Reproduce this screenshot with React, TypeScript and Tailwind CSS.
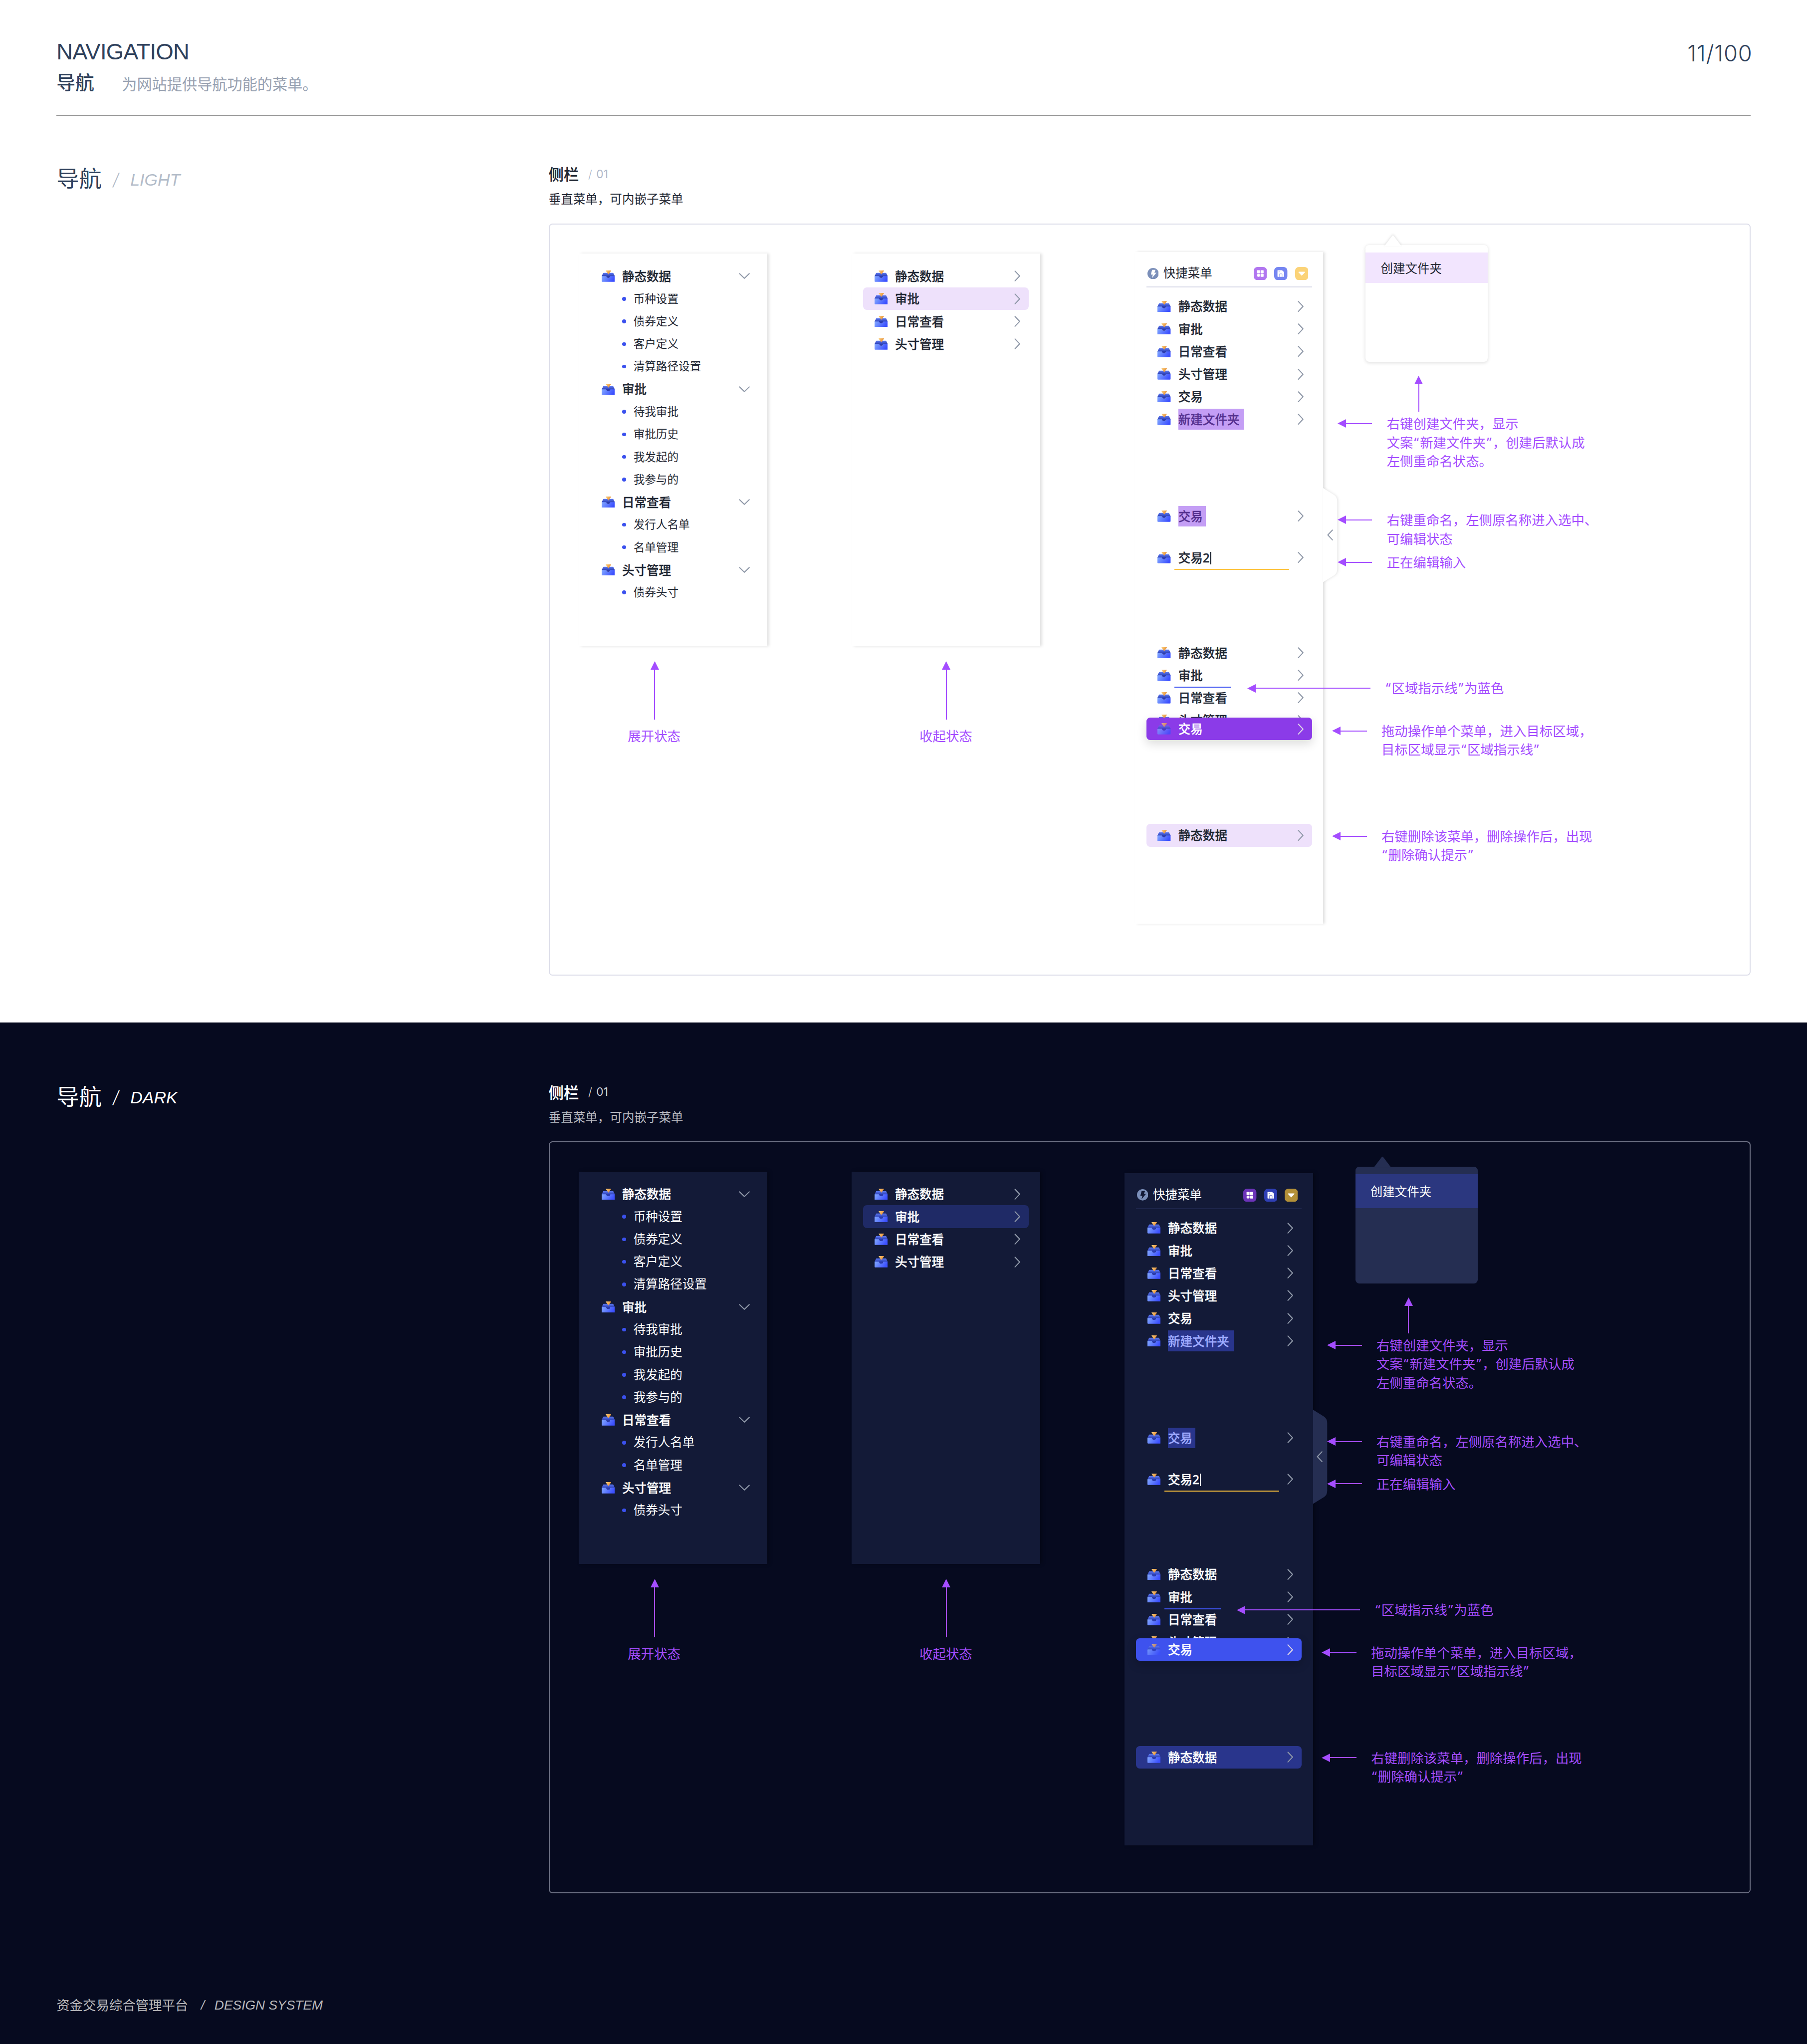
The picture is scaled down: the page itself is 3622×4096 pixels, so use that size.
import React from "react";

type Theme = "light" | "dark";

const CJK = "font-['Noto_Sans','Noto_Sans_CJK_SC',sans-serif]";
const LATIN = "font-['Liberation_Sans',Arial,sans-serif]";

const palette = {
  light: {
    text: "text-[#1f2733]",
    panel: "bg-white shadow-[2px_0_3px_rgba(0,0,0,0.12)]",
    soft: "bg-[#eee1fb]",
    removed: "bg-[#eee1fb]",
    selection: "bg-[#c49ef5] text-[#55308f]",
    dragged: "bg-[#8b3be8] shadow-[0_4px_10px_rgba(0,0,0,0.14)]",
    rule: "bg-[#d9dae8]",
    popover: "bg-white shadow-[0_1px_4px_rgba(0,0,0,0.14)]",
    popoverItem: "bg-[#f2e5fe] h-8",
    popoverFill: "#ffffff",
    handle: "#ffffff",
    bolt: "#ffffff",
    grid: "#b176f0",
    save: "#7585f1",
    caret: "#fbd378",
    sub: "text-xs",
  },
  dark: {
    text: "text-white",
    panel: "bg-[#131a37] shadow-[2px_0_4px_rgba(0,0,0,0.3)]",
    soft: "bg-[#1f2a66]",
    removed: "bg-[#29358c]",
    selection: "bg-[#29358c] text-[#9fabff]",
    dragged: "bg-[#3e52ee] shadow-[0_4px_10px_rgba(0,0,0,0.2)]",
    rule: "bg-[#1d254a]",
    popover: "bg-[#252e52]",
    popoverItem: "bg-[#2b377f] h-9",
    popoverFill: "#252e52",
    handle: "#252e52",
    bolt: "#131a37",
    grid: "#6b33b8",
    save: "#2f3fb4",
    caret: "#b39038",
    sub: "text-[13px]",
  },
};

function TrayIcon({ faded = false }: { faded?: boolean }) {
  return (
    <svg className={faded ? "h-3 w-3.5 shrink-0 opacity-75" : "h-3 w-3.5 shrink-0"} viewBox="0 0 14 12">
      <path d="M2.1 2.5H11.9a.5.5 0 0 1 .4.2L14 6v.3H0V6l1.7-3.3a.5.5 0 0 1 .4-.2Z" fill="url(#lid)" />
      <path d="M.4 6H4.6C5 6 5 6.4 5.1 6.8 5.4 7.6 6 8 7 8s1.7-.4 1.9-1.2C9 6.4 9 6 9.4 6H13.6a.4.4 0 0 1 .4.4v5a.6.6 0 0 1-.6.6H.6a.6.6 0 0 1-.6-.6v-5A.4.4 0 0 1 .4 6Z" fill="url(#front)" />
      <path d="M4.6 6H9.4C9 6 9 6.4 8.9 6.8 8.6 7.6 8 8 7 8S5.4 7.6 5.1 6.8C5 6.4 5 6 4.6 6Z" fill="#2a3bb0" />
      <path d="M4.6 0H9.8c.2 0 .3.2.2.4L7.5 3.8a.4.4 0 0 1-.6 0L4.4.4C4.3.2 4.4 0 4.6 0Z" fill="url(#cone)" />
    </svg>
  );
}

function Chevron({ dir, color = "#8f98a8" }: { dir: "right" | "down" | "left"; color?: string }) {
  const d = { right: "M5.6 2.8 10.5 8 5.6 13.2", down: "M2.8 5.5 8 10.5 13.2 5.5", left: "M10.5 2.8 5.6 8 10.5 13.2" }[dir];
  return (
    <svg className="h-4 w-4 shrink-0" viewBox="0 0 16 16" fill="none">
      <path d={d} stroke={color} strokeWidth="1.1" strokeLinecap="round" strokeLinejoin="round" />
    </svg>
  );
}

function ArrowLeft({ className }: { className: string }) {
  return (
    <div className={`flex h-2.5 shrink-0 items-center ${className}`}>
      <svg className="h-[9px] w-[9px] shrink-0" viewBox="0 0 9 9">
        <path d="M0 4.5 9 0v9Z" fill="#a44dff" />
      </svg>
      <div className="h-[1.1px] flex-1 bg-[#a44dff]" />
    </div>
  );
}

function ArrowUp({ className }: { className: string }) {
  return (
    <div className={`flex w-[9px] flex-col items-center ${className}`}>
      <svg className="h-[9px] w-[9px] shrink-0" viewBox="0 0 9 9">
        <path d="M4.5 0 9 9H0Z" fill="#a44dff" />
      </svg>
      <div className="w-[1.1px] flex-1 bg-[#a44dff]" />
    </div>
  );
}

function Row({
  label,
  className = "",
  labelClass = "",
  dir = "right",
  active = false,
}: {
  label: React.ReactNode;
  className?: string;
  labelClass?: string;
  dir?: "right" | "down";
  active?: boolean;
}) {
  return (
    <div
      className={`mx-3 flex h-6 shrink-0 items-center rounded pr-1 pl-3 text-[13px] font-medium [-webkit-text-stroke-width:0.16px] ${className}`}
    >
      <TrayIcon faded={active} />
      <span className={`ml-2 flex h-[22px] items-center pt-px whitespace-nowrap ${labelClass}`}>{label}</span>
      <span className="flex-1" />
      <Chevron dir={dir} color={active ? "#ded6e6" : "#8f98a8"} />
    </div>
  );
}

const tree = [
  { name: "静态数据", items: ["币种设置", "债券定义", "客户定义", "清算路径设置"] },
  { name: "审批", items: ["待我审批", "审批历史", "我发起的", "我参与的"] },
  { name: "日常查看", items: ["发行人名单", "名单管理"] },
  { name: "头寸管理", items: ["债券头寸"] },
];

function ExpandedMenu({ theme }: { theme: Theme }) {
  const p = palette[theme];
  return (
    <div className={`flex h-[417px] w-50 flex-col pt-3 ${p.panel} ${p.text}`}>
      {tree.map((group) => (
        <React.Fragment key={group.name}>
          <Row label={group.name} dir="down" />
          {group.items.map((item) => (
            <div key={item} className={`flex h-6 shrink-0 items-center pl-[46px] ${p.sub}`}>
              <span className="mr-2 h-1 w-1 rounded-full bg-[#3b51ee]" />
              {item}
            </div>
          ))}
        </React.Fragment>
      ))}
    </div>
  );
}

function CollapsedMenu({ theme }: { theme: Theme }) {
  const p = palette[theme];
  return (
    <div className={`flex h-[417px] w-50 flex-col pt-3 ${p.panel} ${p.text}`}>
      {tree.map((group) => (
        <Row key={group.name} label={group.name} className={group.name === "审批" ? p.soft : ""} />
      ))}
    </div>
  );
}

function QuickMenu({ theme }: { theme: Theme }) {
  const p = palette[theme];
  return (
    <div className={`relative flex h-[714px] w-50 shrink-0 flex-col ${p.panel} ${p.text}`}>
      <div className="mx-3 flex h-[37px] shrink-0 items-center pt-[9px] pr-1 pl-px text-[13px]">
        <svg className="h-3 w-3" viewBox="0 0 12 12">
          <circle cx="6" cy="6" r="6" fill="#7b8fb9" />
          <path d="M4.9 2H8.5L7.4 5H9.6L4.8 10.7 5.7 7H3.6Z" fill={p.bolt} />
        </svg>
        <span className="ml-[5px]">快捷菜单</span>
        <span className="flex-1" />
        <div className="flex gap-2">
          <svg className="h-3.5 w-3.5" viewBox="0 0 14 14">
            <rect width="14" height="14" rx="4" fill={p.grid} />
            <rect x="3.5" y="3.5" width="3.2" height="3.2" rx=".5" fill="#fff" />
            <rect x="7.3" y="3.5" width="3.2" height="3.2" rx=".5" fill="#fff" />
            <circle cx="5.1" cy="8.9" r="1.6" fill="#fff" />
            <rect x="7.3" y="7.3" width="3.2" height="3.2" rx=".5" fill="#fff" />
          </svg>
          <svg className="h-3.5 w-3.5" viewBox="0 0 14 14">
            <rect width="14" height="14" rx="4" fill={p.save} />
            <path d="M4 3.5H8.3L10.5 5.5V10a.5.5 0 0 1-.5.5H4a.5.5 0 0 1-.5-.5V4a.5.5 0 0 1 .5-.5Z" fill="#fff" />
            <path d="M4.7 5.2H6M5.7 10.5V7.3H8.4V10.5" fill="none" stroke={p.save} strokeWidth=".4" />
          </svg>
          <svg className="h-3.5 w-3.5" viewBox="0 0 14 14">
            <rect width="14" height="14" rx="4" fill={p.caret} />
            <path d="M4 5H10c.5 0 .7.4.3.8L7.4 8.9a.5.5 0 0 1-.8 0L3.7 5.8C3.3 5.4 3.5 5 4 5Z" fill="#fff" />
          </svg>
        </div>
      </div>
      <div className={`mx-3 mb-[7.9px] h-[1.1px] shrink-0 ${p.rule}`} />
      <Row label="静态数据" />
      <Row label="审批" />
      <Row label="日常查看" />
      <Row label="头寸管理" />
      <Row label="交易" />
      <Row label="新建文件夹" labelClass={`w-[70px] ${p.selection}`} />
      <Row label="交易" className="mt-[79px]" labelClass={`w-[29px] ${p.selection}`} />
      <Row
        label={
          <>
            交易2
            <i className="ml-[0.3px] h-[13px] w-[1.1px] bg-current" />
          </>
        }
        className="mt-5"
      />
      <div className="-mb-[0.1px] ml-[42px] h-[1.1px] w-[122px] shrink-0 bg-[#fcc23c]" />
      <Row label="静态数据" className="mt-19" />
      <Row label="审批" />
      <div className="-mb-[1.1px] ml-[42px] h-[1.1px] w-15 shrink-0 bg-[#3f54f0]" />
      <Row label="日常查看" />
      <div className={theme === "light" ? "h-[9px] shrink-0 overflow-hidden" : "h-2 shrink-0 overflow-hidden"}>
        <Row label="头寸管理" />
      </div>
      <Row label="交易" active className={`relative text-white ${p.dragged}`} />
      <Row label="静态数据" className={`${theme === "light" ? "mt-[89px]" : "mt-[90.3px]"} ${p.removed}`} />
      <div className="absolute top-[251px] left-full h-25 w-[15px]">
        <svg className="absolute inset-0 h-25 w-[15px] overflow-visible" viewBox="0 0 15 100">
          <path
            d="M0 0 11.8 7.4Q15 9.6 15 14V86Q15 90.4 11.8 92.6L0 100Z"
            fill={p.handle}
            className={theme === "light" ? "[filter:drop-shadow(1px_0_1.5px_rgba(0,0,0,0.1))]" : ""}
          />
        </svg>
        <div className="absolute top-[42px] -left-px">
          <Chevron dir="left" />
        </div>
      </div>
    </div>
  );
}

function Popover({ theme }: { theme: Theme }) {
  const p = palette[theme];
  return (
    <div className={`relative ml-[45px] h-31 w-[130px] rounded pt-2 ${p.popover} ${p.text}`}>
      <svg className="absolute -top-[11px] left-[20.5px] h-3 w-[17px] overflow-visible" viewBox="0 0 17 12">
        <path
          d="M0 11 7.6 1Q8.5 -.2 9.4 1L17 11V12H0Z"
          fill={p.popoverFill}
          className={theme === "light" ? "[filter:drop-shadow(0_-0.5px_1px_rgba(0,0,0,0.12))]" : ""}
        />
      </svg>
      <div className={`relative flex items-center pt-px pl-4 text-[13px] ${p.popoverItem}`}>创建文件夹</div>
    </div>
  );
}

function Note({ lines, className, arrow = "ml-[15px] w-[37px]" }: { lines: string[]; className: string; arrow?: string }) {
  return (
    <div className={`flex items-start gap-[15.5px] ${className}`}>
      <ArrowLeft className={`mt-[4.5px] ${arrow}`} />
      <div className="whitespace-nowrap">
        {lines.map((line) => (
          <div key={line}>
            {line.split(/([“”])/).map((part, i) =>
              part === "“" || part === "”" ? (
                <span key={i} className="mx-[1.1px]">
                  {part}
                </span>
              ) : (
                part
              ),
            )}
          </div>
        ))}
      </div>
    </div>
  );
}

function Notes({ theme }: { theme: Theme }) {
  return (
    <div className="relative -mt-[7px] text-sm leading-5 text-[#a44dff]">
      <Popover theme={theme} />
      <ArrowUp className="mt-[15px] ml-[97px] h-[38px]" />
      <Note className="mt-[3px]" lines={["右键创建文件夹，显示", "文案“新建文件夹”，创建后默认成", "左侧重命名状态。"]} />
      <Note className="mt-[42.3px]" lines={["右键重命名，左侧原名称进入选中、", "可编辑状态"]} />
      <Note className="mt-[5px]" lines={["正在编辑输入"]} />
      <Note className="mt-[114px]" arrow="-ml-[81px] w-[131px]" lines={["“区域指示线”为蓝色"]} />
      <Note className="mt-[25.2px]" arrow="ml-[9.3px] w-[37px]" lines={["拖动操作单个菜单，进入目标区域，", "目标区域显示“区域指示线”"]} />
      <Note className="mt-[71.8px]" arrow="ml-[9.3px] w-[37px]" lines={["右键删除该菜单，删除操作后，出现", "“删除确认提示”"]} />
    </div>
  );
}

function State({ label, indent, children }: { label: string; indent: string; children: React.ReactNode }) {
  return (
    <div className="mt-[31px] mr-[90px] w-50 shrink-0">
      {children}
      <div className={`mt-4 flex w-14 flex-col items-center ${indent}`}>
        <ArrowUp className="ml-px h-[62px]" />
        <div className="mt-2 text-sm leading-5 text-[#a44dff]">{label}</div>
      </div>
    </div>
  );
}

function Section({ theme }: { theme: Theme }) {
  const light = theme === "light";
  return (
    <section className="flex pr-15 pl-15">
      <div className="flex h-9 w-[523px] shrink-0 items-center pt-px">
        <h2 className={`pt-px text-2xl ${light ? "text-[#2f415c]" : "text-white"}`}>导航</h2>
        <span className={`mt-[3px] ml-3 flex items-center text-lg italic ${light ? "text-[#b3bcc9]" : "text-white"}`}>
          <span className="w-[18.5px] font-['Inter',sans-serif] font-light">/</span>
          <span className={LATIN}>{light ? "LIGHT" : "DARK"}</span>
        </span>
      </div>
      <div className="mt-0.5 w-[1277px] shrink-0">
        <div className="flex h-6 items-center">
          <h3
            className={`pt-px text-base font-medium [-webkit-text-stroke-width:0.2px] ${light ? "text-[#1f2733]" : "text-white"}`}
          >
            侧栏
          </h3>
          <span className={`ml-2.5 font-['Inter',sans-serif] text-xs ${light ? "text-[#b0b9c8]" : "text-[#d0d3da]"}`}>
            <span className="mr-[4.5px] font-light">/</span>01
          </span>
        </div>
        <p className={`mt-[4.7px] text-[13px] leading-5 ${light ? "text-[#1f2733]" : "text-[#b9bbc2]"}`}>
          垂直菜单，可内嵌子菜单
        </p>
        <div
          className={`mt-[15.7px] flex h-[799px] items-start rounded border-[1.1px] pl-[31px] ${
            light ? "border-[#dcdde9]" : "border-[#6e7285]"
          }`}
        >
          <State label="展开状态" indent="ml-13">
            <ExpandedMenu theme={theme} />
          </State>
          <State label="收起状态" indent="ml-[72px]">
            <CollapsedMenu theme={theme} />
          </State>
          <div className={light ? "mt-[29px] ml-[11px] flex items-start" : "mt-[33px] flex items-start"}>
            <QuickMenu theme={theme} />
            <Notes theme={theme} />
          </div>
        </div>
      </div>
    </section>
  );
}

export default function App() {
  return (
    <div className="h-screen overflow-hidden bg-[#060a1f]">
      <svg className="absolute h-0 w-0">
        <defs>
          <linearGradient id="lid" x1="0" y1="0" x2="0" y2="1">
            <stop offset="0" stopColor="#5e7af2" />
            <stop offset="1" stopColor="#2b3eb4" />
          </linearGradient>
          <linearGradient id="front" x1="0" y1="0" x2="1" y2="0.3">
            <stop offset="0" stopColor="#83a9ff" />
            <stop offset="1" stopColor="#3c50ff" />
          </linearGradient>
          <linearGradient id="cone" x1="0" y1="0" x2="1" y2="0.5">
            <stop offset="0" stopColor="#fccf7c" />
            <stop offset="1" stopColor="#e58f38" />
          </linearGradient>
        </defs>
      </svg>
      <div className={`w-[1920px] [zoom:1.886458] ${CJK}`}>
        <div className="h-[1086px] bg-white">
          <header className="mx-15 flex h-[122px] justify-between text-[#2f415c]">
            <div className="pt-[39px]">
              <h1 className={`text-2xl leading-8 tracking-[-0.35px] ${LATIN}`}>NAVIGATION</h1>
              <div className="mt-0.5 flex h-7 items-center pt-px">
                <span className="text-xl font-medium">导航</span>
                <span className="mt-1 ml-[29.5px] text-base text-[#98a1b1]">为网站提供导航功能的菜单。</span>
              </div>
            </div>
            <span className="mt-[41px] -mr-[2px] font-['Inter',sans-serif] text-2xl leading-8 font-light tracking-[0.45px]">
              11/100
            </span>
          </header>
          <div className="mx-15 mb-[47.9px] h-[1.1px] bg-[#979797]" />
          <Section theme="light" />
        </div>
        <div className="h-[1086px] bg-[#060a1f] pt-15">
          <Section theme="dark" />
          <footer className="mt-[108.3px] flex h-5 items-center pt-px pl-15 text-sm text-[#b9b9bc]">
            资金交易综合管理平台
            <span className={`ml-[13.5px] flex gap-[10.5px] italic ${LATIN}`}>
              <span>/</span>
              <span>DESIGN SYSTEM</span>
            </span>
          </footer>
        </div>
      </div>
    </div>
  );
}
